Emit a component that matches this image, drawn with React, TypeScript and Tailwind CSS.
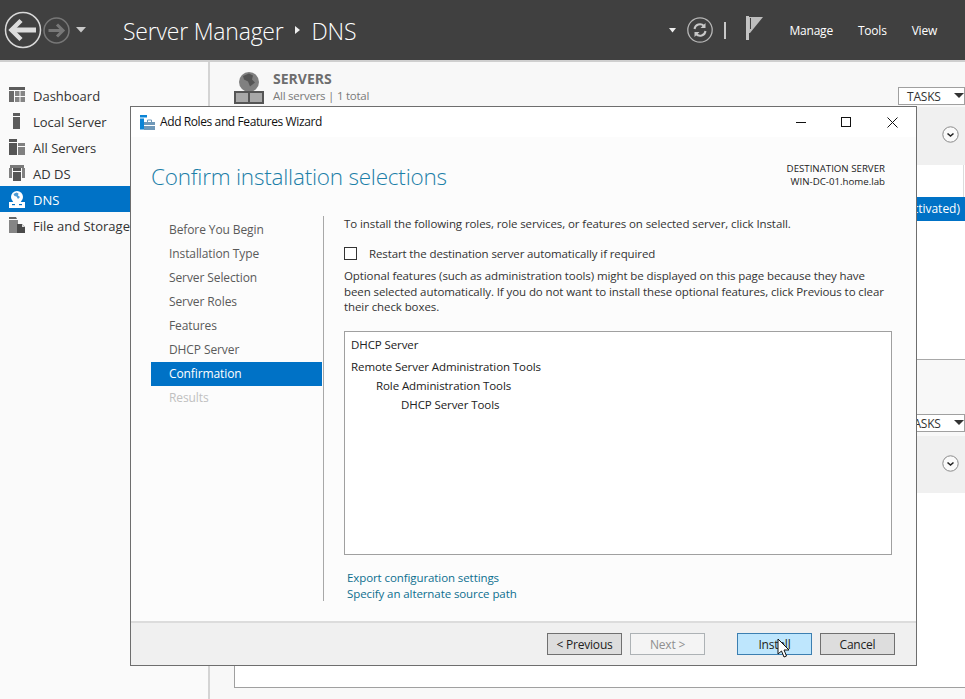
import React from 'react';

const FONT = "font-['Open_Sans','Noto_Sans',sans-serif]";

const NAV = ['Before You Begin', 'Installation Type', 'Server Selection', 'Server Roles', 'Features', 'DHCP Server', 'Confirmation', 'Results'];

function DashboardIcon() {
  return (
    <svg width="16" height="16" viewBox="0 0 16 16" fill="#858585">
      <rect x="0" y="0" width="16" height="3" fill="#5c5c5c" />
      <rect x="0" y="4" width="5" height="11" fill="#6a6a6a" />
      <rect x="6" y="4" width="4.500" height="5" />
      <rect x="11.500" y="4" width="4.500" height="5" />
      <rect x="6" y="10" width="4.500" height="5" />
      <rect x="11.500" y="10" width="4.500" height="5" />
    </svg>
  );
}

function LocalIcon() {
  return (
    <svg width="16" height="16" viewBox="0 0 16 16" fill="#5c5c5c">
      <rect x="4" y="0" width="7" height="3" />
      <rect x="4" y="4" width="7" height="12" />
    </svg>
  );
}

function AllServersIcon() {
  return (
    <svg width="16" height="16" viewBox="0 0 16 16">
      <rect x="0" y="0" width="8" height="3" fill="#555" />
      <rect x="0" y="4" width="8" height="12" fill="#555" />
      <rect x="9" y="4" width="7" height="3" fill="#808080" />
      <rect x="9" y="8" width="7" height="8" fill="#808080" />
    </svg>
  );
}

function AdIcon() {
  return (
    <svg width="16" height="16" viewBox="0 0 16 16">
      <rect x="1" y="0" width="14" height="3" fill="#7a7a7a" />
      <rect x="0" y="3" width="3" height="10" fill="#808080" />
      <rect x="13" y="3" width="3" height="10" fill="#808080" />
      <rect x="4" y="3" width="8" height="3" fill="#555" />
      <rect x="4" y="7" width="8" height="9" fill="#555" />
    </svg>
  );
}

function DnsIcon() {
  return (
    <svg width="16" height="17" viewBox="0 0 16 17">
      <circle cx="8" cy="6" r="6" fill="#fff" />
      <path d="M4.500 3l3-1.500 2 1-.5 2 2 1.500-2 2-1.500-2.500-2-.5z" fill="#4c9bd6" />
      <rect x="0" y="11" width="16" height="6" fill="#fff" />
      <rect x="3" y="13" width="3" height="1.200" fill="#0072c6" />
      <rect x="10" y="13" width="3" height="1.200" fill="#0072c6" />
    </svg>
  );
}

function FileIcon() {
  return (
    <svg width="16" height="16" viewBox="0 0 16 16">
      <path d="M0 0h7l1 2H0z" fill="#666" />
      <rect x="0" y="3" width="9" height="13" fill="#858585" />
      <path d="M8 7h5l3 3v6H8z" fill="#4a4a4a" />
      <path d="M13 7l3 3h-3z" fill="#ddd" />
    </svg>
  );
}

function ChevronCircle() {
  return (
    <svg width="17" height="17" viewBox="0 0 17 17" fill="none">
      <circle cx="8.500" cy="8.500" r="7.700" fill="#fafafa" stroke="#8a8a8a" />
      <path d="M5.500 7.500l3 2.500 3-2.500" stroke="#222" strokeWidth="1.600" />
    </svg>
  );
}

function TasksButton() {
  return (
    <div className="flex h-[18px] w-[67px] shrink-0 items-center justify-between border border-[#a0a0a0] bg-white pl-2 text-[12px] tracking-[-0.2px] text-[#333]">
      <span className="pt-[1px]">TASKS</span>
      <svg width="10" height="6" viewBox="0 0 10 6"><path d="M0 0h10L5 5z" fill="#333" /></svg>
    </div>
  );
}

function SidebarItem({ label, icon, active }: { label: string; icon: React.ReactNode; active?: boolean }) {
  return (
    <div className={`flex h-[26px] items-center gap-2 whitespace-nowrap pl-[9px] text-[13px] ${active ? 'bg-[#0072c6] text-white' : 'text-[#333]'}`}>
      <span className="flex w-[16px] justify-center">{icon}</span>
      <span className="pt-[4px]">{label}</span>
    </div>
  );
}

function WizardButton({ label, kind }: { label: string; kind?: 'disabled' | 'hover' }) {
  const cls =
    kind === 'disabled'
      ? 'border-[#adb2b5] bg-[#f4f4f4] text-[#8f8f8f]'
      : kind === 'hover'
        ? 'border-[#3c7fb1] bg-[#bee6fd] text-[#222]'
        : 'border-[#707070] bg-[#dddddd] text-[#222]';
  return <div className={`flex h-[22px] w-[75px] items-center justify-center border pt-[2px] text-[12px] tracking-[-0.2px] ${cls}`}>{label}</div>;
}

export default function App() {
  return (
    <div className={`relative flex h-[699px] w-[965px] flex-col overflow-hidden bg-[#f8f8f8] ${FONT}`}>
      {/* Top bar */}
      <header className="flex h-[62px] shrink-0 items-center border-b-2 border-[#cfcfcf] bg-[#404040] pr-[28px] text-white">
        <div className="flex w-[123px] items-center pl-[4px]">
          <svg width="38" height="38" viewBox="0 0 38 38" fill="none">
            <circle cx="19" cy="19" r="17.500" stroke="#d8d8d8" strokeWidth="1.500" />
            <path d="M9 19h23" stroke="#dcdcdc" strokeWidth="5" />
            <path d="M17 9.500L7.500 19l9.500 9.500" stroke="#dcdcdc" strokeWidth="4.500" />
          </svg>
          <svg width="27" height="27" viewBox="0 0 27 27" fill="none" className="ml-[1px]">
            <circle cx="13.500" cy="13.500" r="12.500" stroke="#777" strokeWidth="1.500" />
            <path d="M5.500 13.500h14" stroke="#777" strokeWidth="3" />
            <path d="M14 7.500l6 6-6 6" stroke="#777" strokeWidth="3" />
          </svg>
          <svg width="10" height="6" viewBox="0 0 10 6" className="ml-[6px]"><path d="M0 0h10L5 5.500z" fill="#c8c8c8" /></svg>
        </div>
        <div className="flex items-center pt-[3px] text-[23px] font-light tracking-[-0.22px]">
          <span>Server Manager</span>
          <svg width="6" height="8" viewBox="0 0 6 8" className="mx-[11px] mb-[4px]"><path d="M0 0l5 4-5 4z" fill="#eee" /></svg>
          <span>DNS</span>
        </div>
        <div className="ml-auto flex items-center">
          <svg width="7" height="5" viewBox="0 0 7 5"><path d="M0 0h7L3.500 4.500z" fill="#eee" /></svg>
          <svg width="26" height="26" viewBox="0 0 26 26" fill="none" className="ml-[11px]">
            <circle cx="13" cy="13" r="12.200" stroke="#b5b5b5" strokeWidth="1.300" />
            <path d="M7.500 12a5.500 5.500 0 0 1 9.500-3M18.500 14a5.500 5.500 0 0 1-9.500 3" stroke="#c8c8c8" strokeWidth="2" />
            <path d="M18.500 6v5h-5zM7.500 20v-5h5z" fill="#c8c8c8" />
          </svg>
          <div className="ml-[11px] h-[17px] w-[2px] bg-[#c8c8c8]" />
          <svg width="18" height="24" viewBox="0 0 18 24" className="ml-[20px] mb-[4px]">
            <rect x="0" y="0" width="3" height="24" fill="#c4c4c4" />
            <path d="M3 1h14L4 17H3z" fill="#bdbdbd" />
            <rect x="4" y="2" width="1" height="11" fill="#404040" />
          </svg>
          <div className="ml-[26px] flex items-center gap-[25px] pt-[2px] text-[12px] tracking-[-0.22px]">
            <span>Manage</span>
            <span>Tools</span>
            <span>View</span>
          </div>
        </div>
      </header>

      <div className="flex min-h-0 flex-1">
        {/* Left navigation */}
        <aside className="w-[210px] shrink-0 border-r-2 border-[#d4d4d4] bg-[#fafafa] pt-[20px]">
          <SidebarItem label="Dashboard" icon={<DashboardIcon />} />
          <SidebarItem label="Local Server" icon={<LocalIcon />} />
          <SidebarItem label="All Servers" icon={<AllServersIcon />} />
          <SidebarItem label="AD DS" icon={<AdIcon />} />
          <SidebarItem label="DNS" icon={<DnsIcon />} active />
          <SidebarItem label="File and Storage Services" icon={<FileIcon />} />
        </aside>

        {/* Server list behind the wizard */}
        <main className="flex min-w-0 flex-1 flex-col bg-[#f8f8f8] pl-[24px]">
          <div className="flex h-[45px] shrink-0 items-start justify-between">
            <div className="flex items-start gap-[9px]">
              <svg width="30" height="32" viewBox="0 0 30 32" className="mt-[10px]">
                <circle cx="15" cy="10" r="10" fill="#808080" />
                <path d="M9 4l6-2.500 4 2-1 4 3 3-5 4-2-5-4-2z" fill="#555" />
                <rect x="0" y="19" width="30" height="13" fill="#555" />
                <rect x="2" y="21" width="12" height="9" fill="#a8a8a8" />
                <rect x="16" y="21" width="12" height="9" fill="#a8a8a8" />
              </svg>
              <div className="pt-[8px] text-[11.500px] leading-[17px] tracking-[-0.25px] text-[#7a7a7a]">
                <div className="text-[14px] font-bold tracking-normal text-[#6e6e6e]">SERVERS</div>
                <div>All servers | 1 total</div>
              </div>
            </div>
            <div className="pt-[25px]"><TasksButton /></div>
          </div>
          <div className="flex h-[58px] shrink-0 items-center justify-end bg-[#f0f0f0] pb-[4px] pr-[6px]">
            <ChevronCircle />
          </div>
          <div className="flex h-[32px] shrink-0 justify-end bg-white pr-[1px]"><div className="w-px bg-[#dcdcdc]" /></div>
          <div className="flex h-[24px] shrink-0 items-center justify-end bg-[#0072c6] pr-[5px] text-[12px] text-white">Activated)</div>
          <div className="h-[138px] shrink-0 bg-white" />
          <div className="h-[55px] shrink-0 border-t border-[#a8a8a8] bg-[#f8f8f8]" />
          <div className="flex h-[18px] shrink-0 justify-end"><TasksButton /></div>
          <div className="mt-[4px] flex h-[57px] shrink-0 items-center justify-end bg-[#f0f0f0] pb-[2px] pr-[6px]">
            <ChevronCircle />
          </div>
          <div className="h-[194px] shrink-0 border-l border-[#a0a0a0] bg-white" />
          <div className="flex-1 border-t border-[#a0a0a0]" />
        </main>
      </div>

      {/* Wizard window */}
      <section className="absolute left-[130px] top-[106px] flex h-[560px] w-[787px] flex-col border border-[#6e6e6e] bg-[#fcfcfc] text-[#333]">
        <div className="flex h-[30px] shrink-0 items-center bg-white pl-[9px] text-[12px] tracking-[-0.4px] text-[#111]">
          <svg width="15" height="15" viewBox="0 0 15 15">
            <rect x="0" y="0" width="7" height="2.500" fill="#0a84d6" />
            <rect x="0" y="3.500" width="4" height="11" fill="#0a84d6" />
            <path d="M4 7h11v8H4z" fill="#6f98b8" />
            <path d="M7.500 7V5h4v2" fill="none" stroke="#6f98b8" />
            <rect x="4" y="10" width="11" height="1" fill="#fff" />
          </svg>
          <span className="ml-[5px]">Add Roles and Features Wizard</span>
          <div className="ml-auto flex items-center">
            <svg width="11" height="11" viewBox="0 0 11 11" className="mr-[34px]"><rect x="0" y="5" width="10" height="1" fill="#111" /></svg>
            <svg width="10" height="10" viewBox="0 0 10 10" className="mr-[36px]"><rect x="0.500" y="0.500" width="9" height="9" fill="none" stroke="#111" /></svg>
            <svg width="11" height="11" viewBox="0 0 11 11" className="mr-[18px]"><path d="M0.500 0.500l10 10M10.500 0.500l-10 10" stroke="#111" /></svg>
          </div>
        </div>

        <div className="flex h-[79px] shrink-0 justify-between pl-[20px] pr-[31px]">
          <h1 className="mt-[22px] text-[22.500px] font-light leading-[36px] tracking-[-0.22px] text-[#1c7fa8]">Confirm installation selections</h1>
          <div className="mt-[25px] text-right text-[9.700px] leading-[13px] text-[#222]">
            <div>DESTINATION SERVER</div>
            <div>WIN-DC-01.home.lab</div>
          </div>
        </div>

        <div className="flex min-h-0 flex-1 pl-[20px]">
          <nav className="mb-[20px] mr-px w-[171px] shrink-0 pt-[2px] text-[12px] tracking-[-0.1px]">
            {NAV.map((item) => (
              <div
                key={item}
                className={`flex h-[24px] items-center pl-[18px] ${
                  item === 'Confirmation' ? 'bg-[#0072c6] text-white' : item === 'Results' ? 'text-[#c0c0c0]' : 'text-[#5a5a5a]'
                }`}
              >
                {item}
              </div>
            ))}
          </nav>
          <div className="mb-[20px] w-px bg-[#a8a8a8]" />
          <div className="flex min-w-0 flex-1 flex-col pl-[20px] pr-[24px] text-[11.500px] tracking-[-0.09px]">
            <p className="leading-[16px]">To install the following roles, role services, or features on selected server, click Install.</p>
            <label className="mt-[13px] flex items-center">
              <span className="h-[13px] w-[13px] border border-[#333] bg-white" />
              <span className="ml-[12px] tracking-[-0.12px]">Restart the destination server automatically if required</span>
            </label>
            <p className="mt-[6px] leading-[15.500px]">
              Optional features (such as administration tools) might be displayed on this page because they have been selected automatically. If you do not want to install these optional features, click Previous to clear their check boxes.
            </p>
            <div className="mt-[16px] h-[224px] shrink-0 border border-[#a0a0a0] bg-white pl-[6px] pt-[3px] leading-[19px] text-[#222]">
              <div className="mb-[3px]">DHCP Server</div>
              <div>Remote Server Administration Tools</div>
              <div className="pl-[25px]">Role Administration Tools</div>
              <div className="pl-[50px]">DHCP Server Tools</div>
            </div>
            <div className="mt-[15px] pl-[3px] leading-[16px] text-[#0d6f8f]">
              <div>Export configuration settings</div>
              <div>Specify an alternate source path</div>
            </div>
          </div>
        </div>

        <footer className="flex h-[44px] shrink-0 items-center border-t-2 border-[#dcdcdc] bg-[#f0f0f0] pl-[416px]">
          <WizardButton label="< Previous" />
          <div className="ml-[8px]"><WizardButton label="Next >" kind="disabled" /></div>
          <div className="ml-[32px]"><WizardButton label="Install" kind="hover" /></div>
          <div className="ml-[8px]"><WizardButton label="Cancel" /></div>
        </footer>
      </section>

      {/* Mouse pointer */}
      <svg width="14" height="20" viewBox="0 0 14 20" className="absolute left-[777px] top-[638px]">
        <path d="M1 1v15l3.500-3 2.500 6 2.500-1-2.500-6h5z" fill="#fff" stroke="#111" strokeWidth="1" />
      </svg>
    </div>
  );
}
